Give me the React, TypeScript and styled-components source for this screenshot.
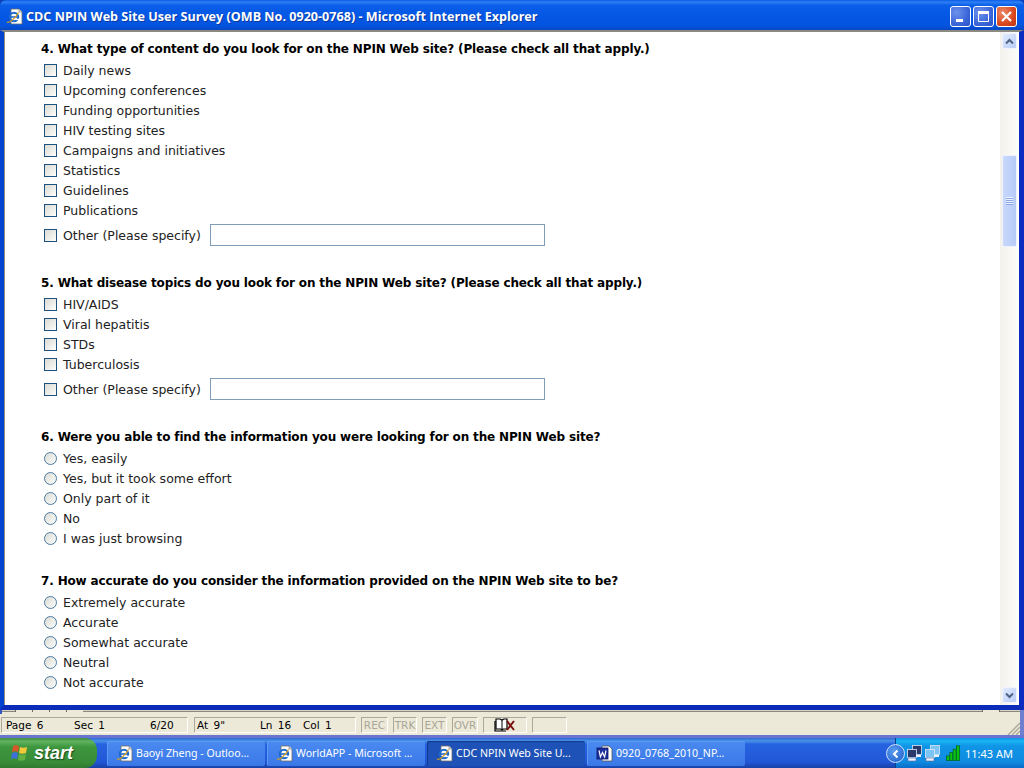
import React from 'react';
import styled, { createGlobalStyle } from 'styled-components';

const Global = createGlobalStyle`
  html, body { margin: 0; padding: 0; background: #0a3fb8; overflow: hidden; }
  * { box-sizing: border-box; }
`;

const Desktop = styled.div`
  width: 1024px;
  height: 768px;
  display: flex;
  flex-direction: column;
  overflow: hidden;
  font-family: "DejaVu Sans", Verdana, sans-serif;
`;

const TitleBar = styled.div`
  height: 30px;
  flex: none;
  display: flex;
  align-items: center;
  padding: 3px 3px 0 6px;
  border-radius: 6px 6px 0 0;
  background: linear-gradient(180deg, #0a5be6 0%, #2f80f4 7%, #0a5ee8 18%, #0456e4 60%, #0355e0 85%, #0a47c4 100%);
`;

const TitleText = styled.div`
  flex: 1;
  margin-left: 3px;
  color: #fff;
  font-family: "Open Sans", "DejaVu Sans", sans-serif;
  font-size: 12.6px;
  font-weight: 700;
  white-space: nowrap;
  text-shadow: 1px 1px 0 #0b3a9e;
`;

const WinButtons = styled.div`
  display: flex;
  gap: 2px;
  margin-right: 4px;
`;

const WinButton = styled.div<{ $close?: boolean }>`
  width: 21px;
  height: 21px;
  border: 1px solid #fff;
  border-radius: 3px;
  display: flex;
  align-items: center;
  justify-content: center;
  background: ${p => p.$close
    ? 'radial-gradient(circle at 30% 30%, #ec8a6c, #d9481f 60%, #b93410)'
    : 'radial-gradient(circle at 30% 30%, #6e92ec, #3a66d8 60%, #2a50c4)'};
`;

const WindowBody = styled.div`
  height: 680px;
  flex: none;
  display: flex;
  background: #fff;
  border-left: 4px solid #0343d0;
  border-right: 5px solid #0a2cc0;
  border-bottom: 5px solid #0a2cb8;
  border-top: 2px solid #8a8a80;
`;

const Page = styled.main`
  flex: 1;
  min-width: 0;
  padding: 5px 0 0 2px;
  background: #fff;
  border-left: 1px solid #8f8d80;
  font-size: 12.5px;
  color: #222;
`;

const Question = styled.section<{ $after: number }>`
  padding-bottom: ${p => p.$after}px;
`;

const Heading = styled.h2`
  margin: 2px 0 1px 0;
  height: 20px;
  line-height: 20px;
  padding-left: 34px;
  font-size: 12px;
  letter-spacing: -0.15px;
  font-weight: 700;
  color: #000;
  white-space: nowrap;
`;

const Row = styled.label`
  display: flex;
  align-items: center;
  height: 20px;
  padding-left: 37px;
  white-space: nowrap;
`;

const OtherRow = styled(Row)`
  height: 22px;
  margin-top: 4px;
`;

const CheckBox = styled.span`
  width: 13px;
  height: 13px;
  flex: none;
  margin-right: 6px;
  border: 1px solid #1c5180;
  background: linear-gradient(135deg, #dcdcd6 0%, #f2f2ee 70%, #fff 100%);
`;

const Radio = styled.span`
  width: 13px;
  height: 13px;
  flex: none;
  margin-right: 6px;
  border: 1px solid #4a7aa4;
  border-radius: 50%;
  background: linear-gradient(135deg, #dcdcd6 0%, #f2f2ee 70%, #fff 100%);
`;

const SpecifyInput = styled.span`
  width: 335px;
  height: 22px;
  margin-left: 9px;
  border: 1px solid #7f9db9;
  background: #fff;
`;

const ScrollTrack = styled.div`
  width: 19px;
  flex: none;
  display: flex;
  flex-direction: column;
  padding: 1px 2px 2px 2px;
  background: linear-gradient(90deg, #f3f1ec, #fdfdfa);
`;

const ScrollBtn = styled.div`
  width: 15px;
  height: 16px;
  flex: none;
  display: flex;
  align-items: center;
  justify-content: center;
  border: 1px solid #eef2fc;
  border-radius: 2px;
  background: linear-gradient(135deg, #e2ebfe, #b9cdf8);
`;

const ScrollGap = styled.div<{ $size?: number }>`
  flex: ${p => (p.$size ? `0 0 ${p.$size}px` : '1')};
`;

const ScrollThumb = styled.div`
  height: 92px;
  flex: none;
  display: flex;
  align-items: center;
  justify-content: center;
  border: 1px solid #eef2fc;
  border-radius: 2px;
  background: linear-gradient(90deg, #c9d8fb, #b6cbf8);
`;

const Grip = styled.div`
  width: 7px;
  height: 8px;
  background: repeating-linear-gradient(180deg, #eef3fe 0 1px, #8aa6e4 1px 2px);
`;

const WordEdge = styled.div`
  height: 4px;
  flex: none;
  display: flex;
  background: linear-gradient(180deg, #d8d4c6 0, #d8d4c6 1px, #8a887c 1px, #8a887c 2px, #ece9d8 2px);
  border-left: 2px solid #3457c4;
  border-right: 4px solid #6f7fd0;
`;

const EdgeTabs = styled.div`
  display: flex;
  height: 2px;
  margin-left: 13px;
`;

const EdgeTab = styled.span`
  width: 17px;
  background: #ece9d8;
  border-left: 1px solid #6f6d62;
`;

const EdgeScroll = styled.span`
  width: 18px;
  height: 2px;
  margin-left: auto;
  margin-right: 20px;
  background: #ece9d8;
  border-left: 1px solid #6f6d62;
  border-right: 1px solid #6f6d62;
`;

const StatusBar = styled.div`
  height: 21px;
  flex: none;
  display: flex;
  gap: 5px;
  align-items: flex-start;
  padding: 3px 4px 0 1px;
  background: #ece9d8;
  border-right: 4px solid #6f7fd0;
  position: relative;
`;

const Cell = styled.div<{ $w: number; $gapLeft?: number }>`
  width: ${p => p.$w}px;
  height: 16px;
  flex: none;
  margin-left: ${p => p.$gapLeft || 0}px;
  display: flex;
  align-items: center;
  white-space: nowrap;
  padding-left: ${p => (p.$gapLeft ? 2 : 4)}px;
  font-size: 10.5px;
  color: #000;
  border: 1px solid;
  border-color: #aca899 #fff #fff #aca899;
`;

const Field = styled.span<{ $w?: number }>`
  width: ${p => (p.$w ? `${p.$w}px` : 'auto')};
  flex: none;
  word-spacing: 2px;
`;

const ModeCell = styled(Cell)`
  padding: 0;
  justify-content: center;
  color: #a8a698;
`;

const Resize = styled.svg`
  position: absolute;
  right: 0;
  bottom: 0;
`;

const Taskbar = styled.footer`
  height: 33px;
  flex: none;
  display: flex;
  align-items: stretch;
  background: linear-gradient(180deg, #3168d5 0, #4993e6 3px, #2663e0 6px, #2157d7 24px, #1941a5 100%);
  border-top: 3px solid #6a75d0;
`;

const StartButton = styled.div`
  width: 97px;
  flex: none;
  display: flex;
  align-items: center;
  gap: 4px;
  padding-left: 10px;
  border-radius: 0 12px 12px 0;
  background: linear-gradient(180deg, #3f8f3f 0, #5fb25f 12%, #3d963d 30%, #388c38 80%, #2f7a2f 100%);
  color: #fff;
  font-family: "Liberation Sans", sans-serif;
  font-style: italic;
  font-weight: 700;
  font-size: 18px;
  text-shadow: 1px 1px 1px #1c4a1c;
`;

const TaskList = styled.div`
  flex: 1;
  display: flex;
  gap: 2px;
  padding: 3px 0 2px 10px;
`;

const TaskButton = styled.div<{ $active?: boolean }>`
  width: 158px;
  display: flex;
  align-items: center;
  gap: 3px;
  padding-left: 9px;
  padding-bottom: 1px;
  border-radius: 2px;
  color: #fff;
  font-family: "Noto Sans", sans-serif;
  font-size: 10.6px;
  white-space: nowrap;
  background: ${p => p.$active ? '#1e52b7' : 'linear-gradient(180deg, #4a8af0, #3a78e8)'};
  box-shadow: ${p => p.$active ? 'inset 1px 1px 1px #123a8c' : 'inset 1px 1px 0 #5c9af4'};
`;

const Tray = styled.div`
  width: 129px;
  flex: none;
  position: relative;
  display: flex;
  align-items: center;
  padding-left: 10px;
  color: #fff;
  font-family: "Noto Sans", sans-serif;
  font-size: 11px;
  background: linear-gradient(180deg, #1290e8 0, #19b6f4 3px, #1095e6 8px, #0f8ae0 24px, #0a6cc8 100%);
  border-left: 1px solid #0b3d8e;
`;

const TrayToggle = styled.div`
  position: absolute;
  left: -10px;
  top: 6px;
  width: 19px;
  height: 19px;
  border-radius: 50%;
  border: 1px solid #cfe0fa;
  background: radial-gradient(circle at 40% 35%, #5a9cf0, #1c5cc8);
  display: flex;
  align-items: center;
  justify-content: center;
`;

const TrayIcons = styled.div`
  display: flex;
  align-items: center;
  gap: 2px;
`;

const TrayGap = styled.span`
  width: 2px;
`;

const Clock = styled.span`
  margin-left: 5px;
  white-space: nowrap;
`;

function IeIcon() {
  return (
    <svg width="17" height="17" viewBox="0 0 17 17" style={{ flex: 'none' }}>
      <path d="M5 1h8l3 3v12H5z" fill="#fff" stroke="#6a6a6a" strokeWidth="0.8" />
      <path d="M13 1v3h3" fill="#dfe6f2" stroke="#6a6a6a" strokeWidth="0.6" />
      <circle cx="8" cy="9" r="4.2" fill="none" stroke="#1c6ad0" strokeWidth="2.1" />
      <path d="M4.5 9h7" stroke="#1c6ad0" strokeWidth="1.6" />
      <path d="M10 11.4h3" stroke="#fff" strokeWidth="1.4" />
      <path d="M1 14c2 1.5 9-4 11.5-9.5" fill="none" stroke="#d99a1c" strokeWidth="1.2" />
    </svg>
  );
}

function WordIcon() {
  return (
    <svg width="17" height="17" viewBox="0 0 17 17" style={{ flex: 'none' }}>
      <path d="M6 1h7l3 3v12H6z" fill="#fff" stroke="#555" strokeWidth="0.8" />
      <rect x="1" y="3" width="11" height="11" fill="#1c2f9c" stroke="#0b1360" strokeWidth="0.8" />
      <path d="M3 5.5l1.4 6.5 2.1-4.5 2.1 4.5L10 5.5" fill="none" stroke="#fff" strokeWidth="1.2" />
    </svg>
  );
}

function XpFlag() {
  return (
    <svg width="20" height="18" viewBox="0 0 20 18" style={{ flex: 'none' }}>
      <path d="M3 2c2-1 4-1 6 0l-1 6c-2-1-4-1-6 0z" fill="#d8572a" />
      <path d="M10 2c2 1 4 1 7 0l-1 6c-3 1-5 1-7 0z" fill="#f3c83a" transform="translate(0 1)" />
      <path d="M2 9c2-1 4-1 6 0l-1 6c-2-1-4-1-6 0z" fill="#3f6fd8" />
      <path d="M9 10c2 1 4 1 7 0l-1 6c-3 1-5 1-7 0z" fill="#63b044" />
    </svg>
  );
}

function NetIcon({ screen }: { screen: string }) {
  return (
    <svg width="16" height="18" viewBox="0 0 16 18">
      <rect x="6.5" y="1.5" width="9" height="9" fill={screen} stroke="#dce6f8" strokeWidth="0.8" />
      <rect x="1.5" y="5.5" width="9" height="8" fill={screen} stroke="#dce6f8" strokeWidth="0.8" />
      <rect x="2" y="14" width="8" height="3" fill="#eef2fc" stroke="#5a6a9a" strokeWidth="0.6" />
      <rect x="10" y="11" width="5" height="2" fill="#eef2fc" />
    </svg>
  );
}

function SignalIcon() {
  return (
    <svg width="14" height="16" viewBox="0 0 14 16">
      {[0, 1, 2, 3].map(i => (
        <rect key={i} x={0.5 + i * 3.3} y={11 - i * 3.4} width="3" height={4.5 + i * 3.4} fill="#0cc40c" stroke="#063" strokeWidth="0.8" />
      ))}
    </svg>
  );
}

function BookIcon() {
  return (
    <svg width="22" height="14" viewBox="0 0 22 14">
      <path d="M2 1h4l2 1 2-1h3v10H9l-1 1-1-1H2z" fill="#fff" stroke="#000" strokeWidth="1.2" />
      <path d="M1 3v10h11" fill="none" stroke="#000" strokeWidth="1.2" />
      <path d="M8 2v9" stroke="#000" />
      <path d="M13 3l7 9M20 3l-7 9" stroke="#7a1010" strokeWidth="2" />
    </svg>
  );
}

const contentOptions = ['Daily news', 'Upcoming conferences', 'Funding opportunities', 'HIV testing sites', 'Campaigns and initiatives', 'Statistics', 'Guidelines', 'Publications'];
const topicOptions = ['HIV/AIDS', 'Viral hepatitis', 'STDs', 'Tuberculosis'];
const findOptions = ['Yes, easily', 'Yes, but it took some effort', 'Only part of it', 'No', 'I was just browsing'];
const accuracyOptions = ['Extremely accurate', 'Accurate', 'Somewhat accurate', 'Neutral', 'Not accurate'];

function CheckQuestion({ title, options }: { title: string; options: string[] }) {
  return (
    <Question $after={25}>
      <Heading>{title}</Heading>
      {options.map(o => <Row key={o}><CheckBox />{o}</Row>)}
      <OtherRow><CheckBox />Other (Please specify)<SpecifyInput /></OtherRow>
    </Question>
  );
}

function RadioQuestion({ title, options }: { title: string; options: string[] }) {
  return (
    <Question $after={21}>
      <Heading>{title}</Heading>
      {options.map(o => <Row key={o}><Radio />{o}</Row>)}
    </Question>
  );
}

export default function App() {
  return (
    <Desktop>
      <Global />
      <TitleBar>
        <IeIcon />
        <TitleText>CDC NPIN Web Site User Survey (OMB No. 0920-0768) - Microsoft Internet Explorer</TitleText>
        <WinButtons>
          <WinButton>
            <svg width="13" height="13" viewBox="0 0 13 13"><rect x="2" y="9" width="7" height="3" fill="#fff" /></svg>
          </WinButton>
          <WinButton>
            <svg width="13" height="13" viewBox="0 0 13 13"><path d="M1.5 3.5h10v8h-10z" fill="none" stroke="#fff" /><rect x="1" y="1" width="11" height="3" fill="#fff" /></svg>
          </WinButton>
          <WinButton $close>
            <svg width="13" height="13" viewBox="0 0 13 13"><path d="M2 2l9 9M11 2l-9 9" stroke="#fff" strokeWidth="2.2" /></svg>
          </WinButton>
        </WinButtons>
      </TitleBar>
      <WindowBody>
        <Page>
          <CheckQuestion title="4. What type of content do you look for on the NPIN Web site? (Please check all that apply.)" options={contentOptions} />
          <CheckQuestion title="5. What disease topics do you look for on the NPIN Web site? (Please check all that apply.)" options={topicOptions} />
          <RadioQuestion title="6. Were you able to find the information you were looking for on the NPIN Web site?" options={findOptions} />
          <RadioQuestion title="7. How accurate do you consider the information provided on the NPIN Web site to be?" options={accuracyOptions} />
        </Page>
        <ScrollTrack>
          <ScrollBtn>
            <svg width="9" height="7" viewBox="0 0 9 7"><path d="M1 5.5l3.5-3.5 3.5 3.5" fill="none" stroke="#4d6185" strokeWidth="2" /></svg>
          </ScrollBtn>
          <ScrollGap $size={106} />
          <ScrollThumb><Grip /></ScrollThumb>
          <ScrollGap />
          <ScrollBtn>
            <svg width="9" height="7" viewBox="0 0 9 7"><path d="M1 1.5l3.5 3.5 3.5-3.5" fill="none" stroke="#4d6185" strokeWidth="2" /></svg>
          </ScrollBtn>
        </ScrollTrack>
      </WindowBody>
      <WordEdge>
        <EdgeTabs>
          <EdgeTab /><EdgeTab /><EdgeTab /><EdgeTab />
        </EdgeTabs>
        <EdgeScroll />
      </WordEdge>
      <StatusBar>
        <Cell $w={187}>
          <Field $w={68}>Page 6</Field>
          <Field $w={76}>Sec 1</Field>
          <Field>6/20</Field>
        </Cell>
        <Cell $w={162} $gapLeft={1}>
          <Field $w={63}>At 9"</Field>
          <Field $w={43}>Ln 16</Field>
          <Field>Col 1</Field>
        </Cell>
        <ModeCell $w={27}>REC</ModeCell>
        <ModeCell $w={24}>TRK</ModeCell>
        <ModeCell $w={25}>EXT</ModeCell>
        <ModeCell $w={26}>OVR</ModeCell>
        <ModeCell $w={44}><BookIcon /></ModeCell>
        <ModeCell $w={35} />
        <Resize width="14" height="14" viewBox="0 0 14 14">
          <path d="M14 2L2 14M14 6L6 14M14 10l-4 4" stroke="#aca899" strokeWidth="1.4" />
        </Resize>
      </StatusBar>
      <Taskbar>
        <StartButton><XpFlag />start</StartButton>
        <TaskList>
          <TaskButton><IeIcon />Baoyi Zheng - Outloo...</TaskButton>
          <TaskButton><IeIcon />WorldAPP - Microsoft ...</TaskButton>
          <TaskButton $active><IeIcon />CDC NPIN Web Site U...</TaskButton>
          <TaskButton><WordIcon />0920_0768_2010_NP...</TaskButton>
        </TaskList>
        <Tray>
          <TrayToggle>
            <svg width="9" height="10" viewBox="0 0 9 10"><path d="M6.5 1.5L3 5l3.5 3.5" fill="none" stroke="#fff" strokeWidth="2" /></svg>
          </TrayToggle>
          <TrayIcons>
            <NetIcon screen="#2a3a6a" />
            <NetIcon screen="#7cc4f4" />
            <TrayGap />
            <SignalIcon />
          </TrayIcons>
          <Clock>11:43 AM</Clock>
        </Tray>
      </Taskbar>
    </Desktop>
  );
}
